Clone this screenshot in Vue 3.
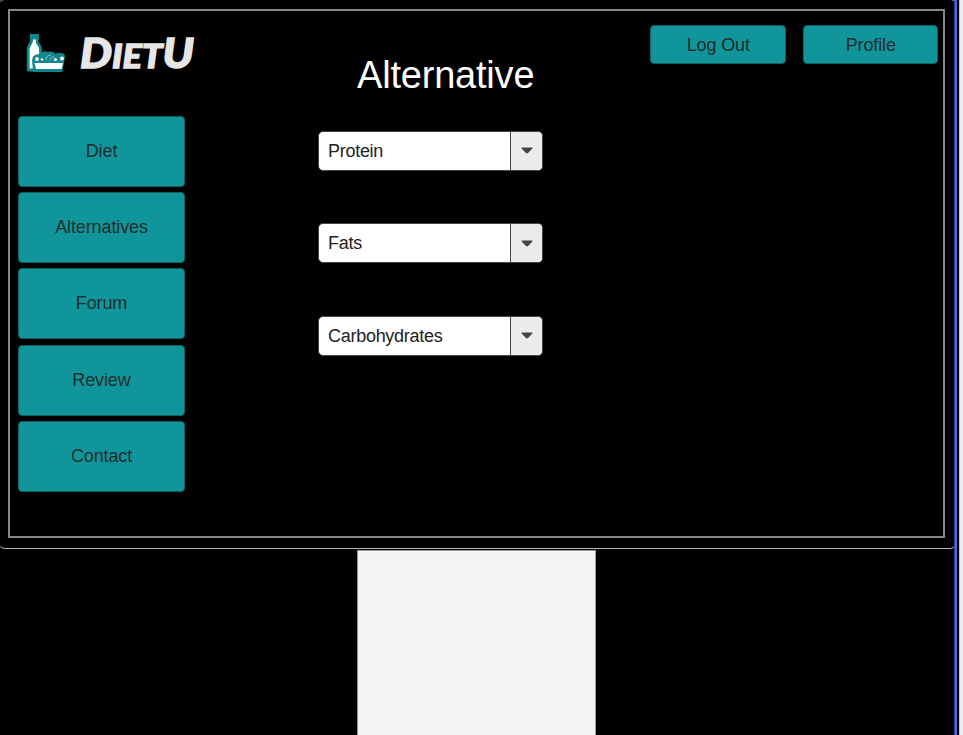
<script setup>
const navigation = ['Diet', 'Alternatives', 'Forum', 'Review', 'Contact']
const categories = ['Protein', 'Fats', 'Carbohydrates']
</script>

<template>
  <div class="page">
    <div class="canvas">
      <div class="monitor">
        <main class="screen">
          <aside class="side">
            <div class="brand">
              <svg class="mark" viewBox="0 0 41 40" width="41" height="40">
                <path d="M5.500 1h6v4l-.5 2c0 3 3.500 4 3.500 8v21H2.200V15c0-4 3.300-5 3.300-8z" fill="#fff" stroke="#10878d" stroke-width="2.800" stroke-linejoin="round" />
                <path d="M4 0h9v5.500H4z" fill="#10878d" />
                <path d="M7.500 6h2v5h-2z" fill="#fff" />
                <path d="M8 37l-1-11 1-3c2-2 5-2 6-2 3-3 6-3 8-1.500 3-2 6-1 7 2 3-3 9-2 9 1l-2.500 14.500z" fill="#10878d" stroke="#10878d" stroke-width="2" stroke-linejoin="round" />
                <path d="M8.500 29h28.500l-1.500 6H10z" fill="#fff" />
                <g fill="#fff">
                  <circle cx="11" cy="25" r="1.900" />
                  <circle cx="29.500" cy="25.500" r="1.600" />
                  <circle cx="36" cy="24.500" r="1.900" />
                  <circle cx="16" cy="25.500" r="1.200" />
                </g>
                <path d="M20 26c0-3 2-5 5-5M24 26c1-2 2-3 4-3" fill="none" stroke="#8cc9cb" stroke-width="1" />
              </svg>
              <svg class="wordmark" width="120" height="40" viewBox="0 0 120 40">
                <text x="3" y="33.700" font-size="41" textLength="114" lengthAdjust="spacingAndGlyphs">D<tspan font-size="33">IET</tspan>U</text>
              </svg>
            </div>
            <nav class="menu">
              <button v-for="item in navigation" :key="item" class="button">{{ item }}</button>
            </nav>
          </aside>
          <section class="content">
            <h1>Alternative</h1>
            <div class="selects">
              <div v-for="category in categories" :key="category" class="select">
                <span class="value">{{ category }}</span>
                <span class="toggle">
                  <svg width="12" height="7" viewBox="0 0 12 7"><path d="M.8.500h10.400q.6.500 0 1.300L7 6q-1 .8-2 0L.8 1.800Q.2 1 .8.500z" fill="#444" /></svg>
                </span>
              </div>
            </div>
          </section>
          <div class="account">
            <button class="button">Log Out</button>
            <button class="button">Profile</button>
          </div>
        </main>
      </div>
      <div class="stand"></div>
    </div>
    <div class="guide"></div>
    <div class="gutter"></div>
  </div>
</template>

<style>
body { margin: 0; overflow: hidden; background: #000; }
</style>

<style scoped>
.page {
  display: flex;
  width: 963px;
  height: 735px;
  overflow: hidden;
  background: #000;
  font-family: "Liberation Sans", Arial, sans-serif;
}
.page * { box-sizing: border-box; }
.canvas { flex: none; width: 954px; height: 735px; }
.monitor {
  width: 957px;
  height: 550px;
  margin: -1px 0 0 -1px;
  padding: 10px 10px 10px 9px;
  border: 1px solid #b4b9b4;
  border-width: 1px 0 1px 0;
  border-radius: 6px;
}
.screen {
  display: flex;
  width: 937px;
  height: 529px;
  margin-top: -1px;
  border: 2px solid #888;
}
.side { flex: none; width: 175px; padding-left: 8px; }
.brand { display: flex; height: 105px; padding: 23px 0 0 8px; }
.mark { flex: none; margin-right: 10px; }
.wordmark { flex: none; overflow: visible; }
.wordmark text {
  fill: #e6e6e6;
  font-family: Lato, sans-serif;
  font-style: italic;
  font-weight: 900;
  stroke: #e6e6e6;
  stroke-width: 1.300px;
  stroke-linejoin: miter;
}
.menu { display: grid; grid-auto-rows: 71px; row-gap: 5.220px; }
.button {
  padding: 0;
  border: 1px solid #0b6267;
  border-radius: 4px;
  background: #10959a;
  color: #202d2e;
  font: 18px "Liberation Sans", Arial, sans-serif;
  letter-spacing: -.12px;
}
.content { flex: none; width: 366px; margin-left: 133px; }
h1 {
  margin: 0;
  padding: 42px 0 0 39px;
  color: #fff;
  font-size: 38px;
  font-weight: 400;
  letter-spacing: -.2px;
  line-height: 44px;
}
.selects { display: grid; grid-auto-rows: 40px; row-gap: 52.500px; margin-top: 33.600px; }
.select {
  display: flex;
  width: 225px;
  border: 1px solid #444;
  border-radius: 5px;
  overflow: hidden;
  background: #fff;
  color: #222;
  font-size: 18px;
  letter-spacing: -.28px;
}
.value { flex: 1; padding-left: 9px; line-height: 38px; }
.toggle {
  display: flex;
  align-items: center;
  justify-content: center;
  width: 32px;
  border-left: 1px solid #444;
  background: #ebebeb;
}
.account { display: flex; gap: 17px; height: 39px; margin: 14px 0 0 -34px; }
.account .button { flex: none; width: 135.500px; padding: 2px 0 0 1px; }
.stand {
  width: 239px;
  height: 190px;
  margin: 1px 0 0 358px;
  border: 1px solid #929b92;
  background: #f5f5f5;
}
.monitor + .stand { margin-left: 357px; }
.guide { flex: none; width: 3px; border-left: 1px solid #2945a8; background: #4969dc; }
.gutter { flex: none; width: 4px; margin-left: 2px; border-left: 1px solid #c9c5cc; background: #f0edf2; }
</style>
